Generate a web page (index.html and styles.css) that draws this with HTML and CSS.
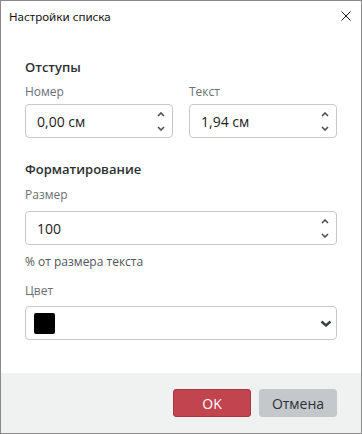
FILE: index.html
```html
<!DOCTYPE html>
<html lang="ru">
<head>
<meta charset="utf-8">
<link rel="stylesheet" href="styles.css">
</head>
<body>
<div class="window">
  <div class="titlebar">
    <span class="title">Настройки списка</span>
    <svg class="close" width="10" height="10" viewBox="0 0 10 10"><path d="M0.5 0.5L9.5 9.5M9.5 0.5L0.5 9.5" stroke="#1a1a1a" stroke-width="1" fill="none"/></svg>
  </div>
  <div class="content">
    <div class="section-title">Отступы</div>
    <div class="row">
      <div class="field">
        <div class="label">Номер</div>
        <div class="input">
          <span class="value">0,00 см</span>
          <span class="spin">
            <svg width="8" height="5" viewBox="0 0 8 5"><path d="M1 4L4 1L7 4" stroke="#4a4f54" stroke-width="1.6" fill="none"/></svg>
            <svg width="8" height="5" viewBox="0 0 8 5"><path d="M1 1L4 4L7 1" stroke="#4a4f54" stroke-width="1.6" fill="none"/></svg>
          </span>
        </div>
      </div>
      <div class="field">
        <div class="label">Текст</div>
        <div class="input">
          <span class="value">1,94 см</span>
          <span class="spin">
            <svg width="8" height="5" viewBox="0 0 8 5"><path d="M1 4L4 1L7 4" stroke="#4a4f54" stroke-width="1.6" fill="none"/></svg>
            <svg width="8" height="5" viewBox="0 0 8 5"><path d="M1 1L4 4L7 1" stroke="#4a4f54" stroke-width="1.6" fill="none"/></svg>
          </span>
        </div>
      </div>
    </div>

    <div class="section-title sec2">Форматирование</div>
    <div class="label lbl2">Размер</div>
    <div class="input">
      <span class="value">100</span>
      <span class="spin">
        <svg width="8" height="5" viewBox="0 0 8 5"><path d="M1 4L4 1L7 4" stroke="#4a4f54" stroke-width="1.6" fill="none"/></svg>
        <svg width="8" height="5" viewBox="0 0 8 5"><path d="M1 1L4 4L7 1" stroke="#4a4f54" stroke-width="1.6" fill="none"/></svg>
      </span>
    </div>
    <div class="hint">% от размера текста</div>
    <div class="label lbl3">Цвет</div>
    <div class="select">
      <span class="swatch"></span>
      <svg class="chev" width="12" height="7" viewBox="0 0 12 7"><path d="M1.5 1.5L6 5.5L10.5 1.5" stroke="#3a4045" stroke-width="2.4" fill="none"/></svg>
    </div>
  </div>
  <div class="footer">
    <button class="btn ok">OK</button>
    <button class="btn cancel">Отмена</button>
  </div>
</div>
</body>
</html>
```
FILE: styles.css
```css
* { box-sizing: border-box; }
html, body { margin: 0; padding: 0; background: #fff; }
body { font-family: "Open Sans", "Noto Sans", sans-serif; }

.window {
  width: 362px;
  height: 434px;
  border: 1px solid #8a8a8a;
  display: flex;
  flex-direction: column;
  background: #fff;
}

.titlebar {
  height: 30px;
  display: flex;
  align-items: center;
  justify-content: space-between;
  padding: 0 10px 0 8px;
  flex: none;
}
.title {
  font-family: "Noto Sans", sans-serif;
  font-size: 11.6px;
  color: #111;
  margin-top: 1px;
}
.close { margin-right: 0; margin-top: 0; }

.content {
  flex: 1;
  padding: 27px 24px 0 24px;
}

.section-title {
  font-size: 13px;
  line-height: 18px;
  font-weight: 600;
  color: #2b2f33;
}
.sec2 { margin-top: 22px; }

.row {
  display: flex;
  gap: 16px;
  margin-top: 8px;
}
.field { flex: 1; }

.label {
  font-size: 12px;
  line-height: 16px;
  color: #6b7075;
  margin-bottom: 4px;
}
.lbl2 { margin-top: 9px; margin-bottom: 8px; }
.lbl3 { margin-top: 13px; margin-bottom: 7px; }

.input, .select {
  height: 34px;
  border: 1px solid #c9c9c9;
  border-radius: 4px;
  display: flex;
  align-items: center;
  justify-content: space-between;
  padding: 0 7px 0 11px;
}
.value {
  font-size: 14px;
  color: #222;
}
.spin {
  display: flex;
  flex-direction: column;
  gap: 9px;
  margin-top: 1px;
}
.spin svg { display: block; }

.hint {
  font-size: 12px;
  line-height: 16px;
  color: #50555a;
  margin-top: 9px;
}

.select { padding: 0 4px 0 8px; }
.swatch {
  width: 21px;
  height: 21px;
  background: #000;
  border-radius: 2px;
}
.chev { display: block; margin-right: 0; }

.footer {
  flex: none;
  height: 60px;
  background: #f0f1f1;
  display: flex;
  justify-content: flex-end;
  align-items: center;
  gap: 8px;
  padding-right: 24px;
}
.btn {
  width: 78px;
  height: 28px;
  border-radius: 3px;
  font-family: "Open Sans", "Noto Sans", sans-serif;
  font-size: 14px;
  padding: 0;
}
.ok {
  background: #c1444f;
  border: 1px solid #a6363f;
  color: #fff;
}
.cancel {
  background: #c5c8cb;
  border: 1px solid #c5c8cb;
  color: #2b2f33;
}
```
